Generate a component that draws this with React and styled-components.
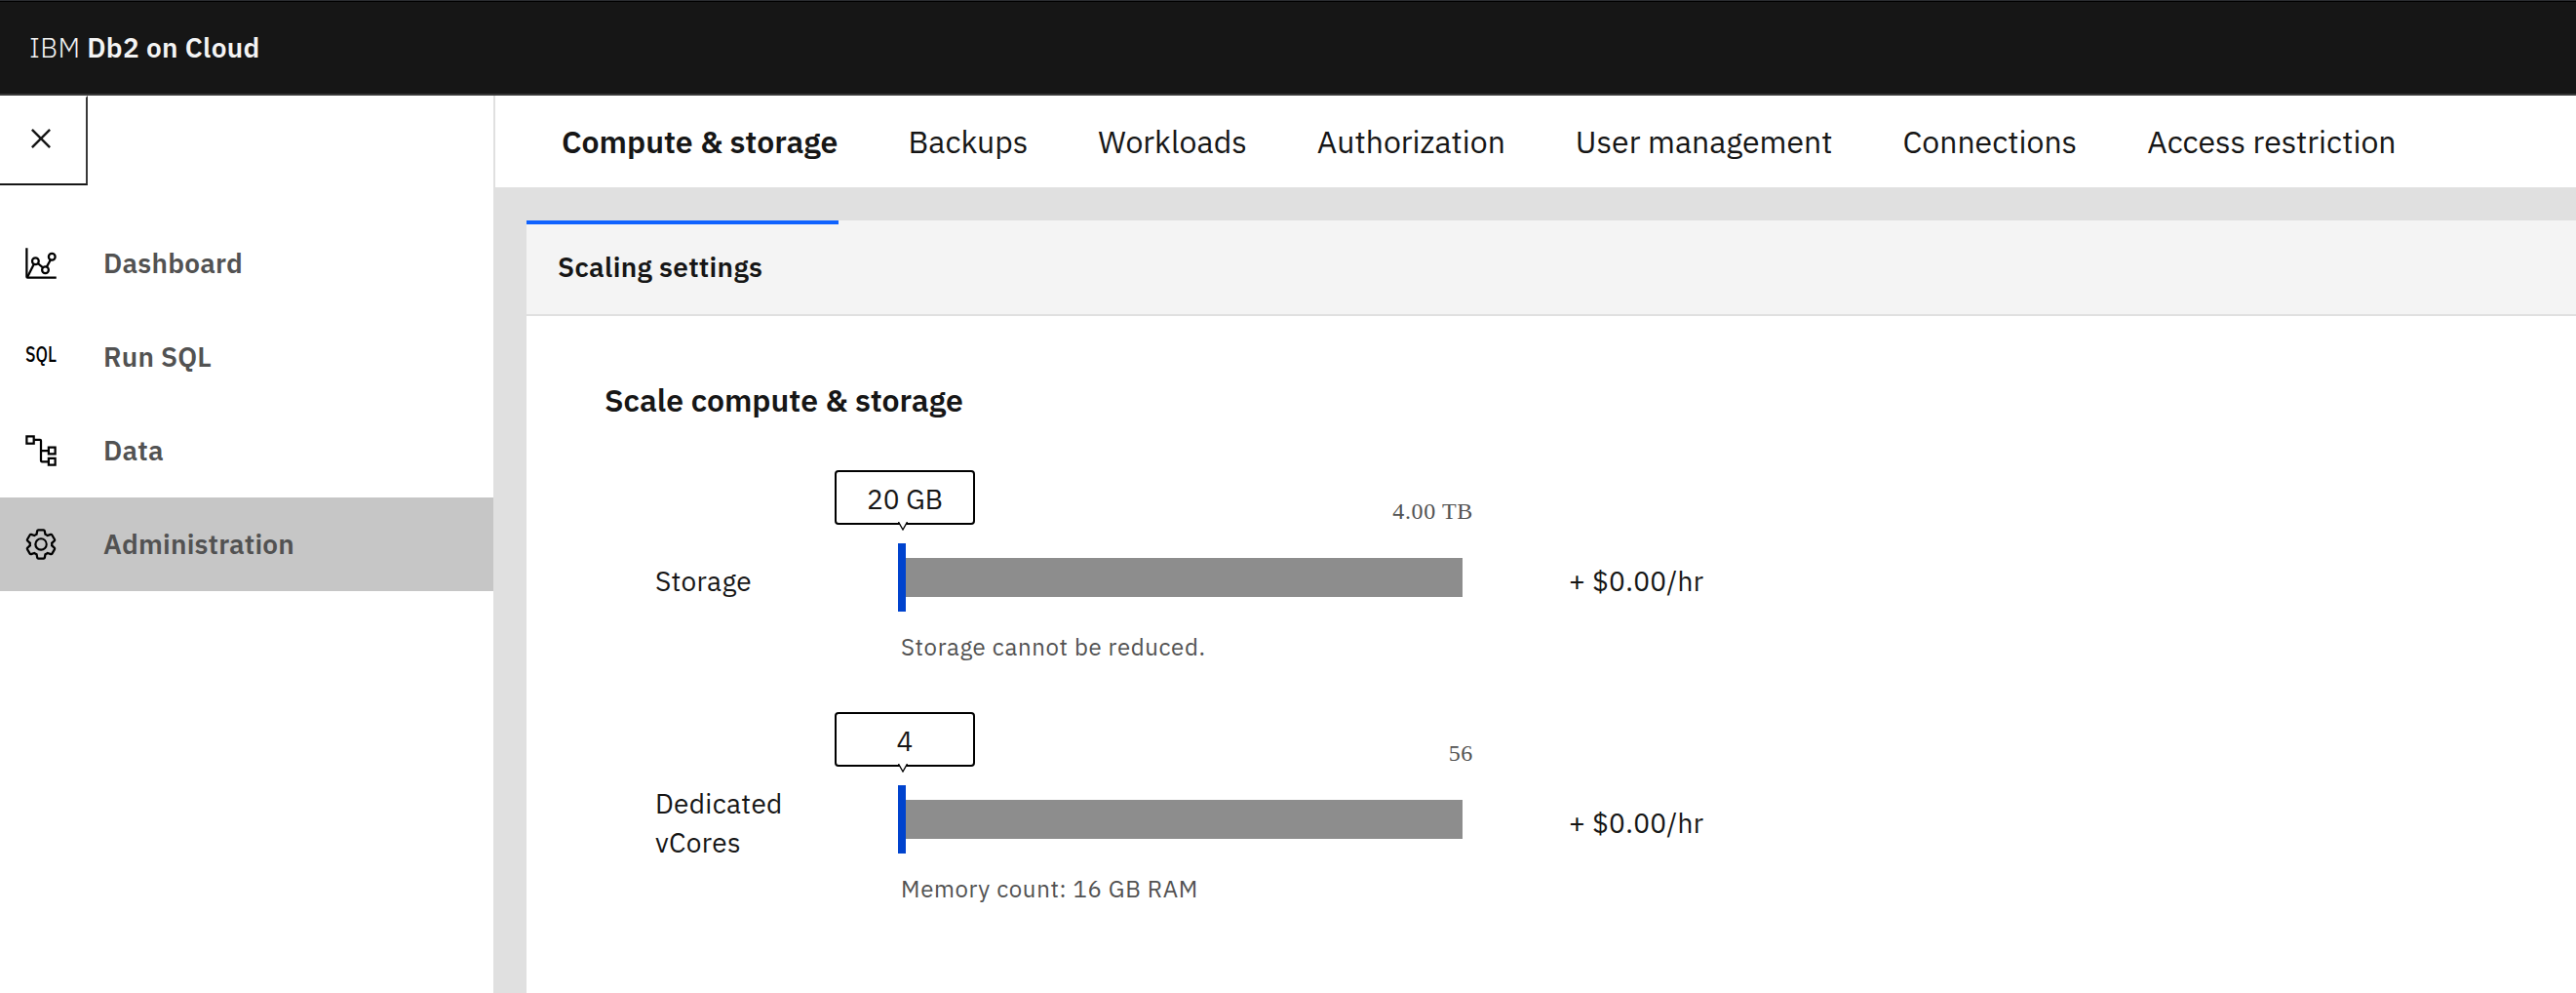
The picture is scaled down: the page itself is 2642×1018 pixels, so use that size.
import React from "react";
import styled, { createGlobalStyle } from "styled-components";

const GlobalStyle = createGlobalStyle`
  *, *::before, *::after { box-sizing: border-box; }
  body {
    margin: 0;
    background: #fff;
    color: #161616;
    font-family: "IBM Plex Sans", Roboto, "Liberation Sans", sans-serif;
    font-size: 28px;
    letter-spacing: 0.32px;
  }
`;

const Page = styled.div`
  display: flex;
  flex-direction: column;
  height: 1018px;
  overflow: hidden;
`;

const Header = styled.header`
  display: flex;
  align-items: center;
  flex: none;
  height: 98px;
  padding: 0 30px;
  background: #161616;
  border-top: 1px solid #2b2d31;
  border-bottom: 2px solid #393939;
  box-shadow: inset 0 1px 0 #000;
  color: #f4f4f4;
  white-space: pre;
`;

const Vendor = styled.span`
  font-weight: 300;
`;

const Product = styled.span`
  font-weight: 600;
`;

const Body = styled.div`
  display: flex;
  flex: 1;
  min-height: 0;
`;

const Sidebar = styled.aside`
  flex: none;
  width: 508px;
  border-right: 2px solid #e0e0e0;
  background: #fff;
`;

const CloseButton = styled.button`
  display: flex;
  align-items: center;
  width: 90px;
  height: 92px;
  padding: 0 0 4px 22px;
  border-style: solid;
  border-color: #fff #393939 #161616;
  border-width: 2px 2px 2px 0;
  background: #fff;
`;

const Nav = styled.nav`
  padding-top: 32px;
`;

const NavItem = styled.a`
  display: flex;
  align-items: center;
  gap: 46px;
  height: 96px;
  padding-left: 24px;
  background: ${(p) => (p.$active ? "#c6c6c6" : "transparent")};
  color: #525252;
  font-weight: 600;
  letter-spacing: 0.2px;
`;

const NavLabel = styled.span`
  padding-bottom: 1px;
`;

const Icon = styled.svg`
  flex: none;
  display: block;
  overflow: visible;
  width: ${(p) => p.$size}px;
  height: ${(p) => p.$size}px;
  fill: ${(p) => (p.$stroked ? "none" : p.$color || "#000")};
  stroke: ${(p) => (p.$stroked ? "#000" : "none")};
  stroke-width: 2;
`;

const SqlText = styled.text`
  fill: #000;
  stroke: none;
  font-family: "IBM Plex Sans", Roboto, sans-serif;
  font-size: 22.5px;
  font-weight: 500;
  letter-spacing: 0;
`;

const Main = styled.main`
  display: flex;
  flex-direction: column;
  flex: 1;
  min-width: 0;
  background: #e0e0e0;
`;

const Tabs = styled.div`
  display: flex;
  align-items: center;
  gap: 72px;
  flex: none;
  height: 94px;
  padding-left: 68px;
  background: #fff;
  font-size: 32px;
  letter-spacing: 0;
`;

const Tab = styled.span`
  font-weight: ${(p) => (p.$active ? 600 : 400)};
  white-space: nowrap;
`;

const Panel = styled.section`
  display: flex;
  flex-direction: column;
  flex: 1;
  margin: 34px 0 0 32px;
  background: #fff;
`;

const PanelBar = styled.div`
  flex: none;
  height: 98px;
  background: #f4f4f4;
  border-bottom: 2px solid #e0e0e0;
`;

const PanelTab = styled.div`
  display: flex;
  align-items: center;
  width: 320px;
  height: 96px;
  padding: 0 0 5px 32px;
  border-top: 4px solid #0f62fe;
  font-weight: 600;
`;

const PanelBody = styled.div`
  padding: 66px 0 0 80px;
`;

const Heading = styled.h2`
  margin: 0 0 52px;
  font-size: 32px;
  line-height: 40px;
  font-weight: 600;
  letter-spacing: 0;
`;

const ScaleRow = styled.div`
  display: grid;
  grid-template-columns: 249px 590px auto;
  height: 248px;
  padding-left: 52px;
`;

const RowLabel = styled.div`
  display: flex;
  align-items: center;
  width: 150px;
  height: 228px;
  line-height: 40px;
`;

const Price = styled(RowLabel)`
  width: auto;
  padding-left: 98px;
`;

const Slider = styled.div`
  display: flex;
  flex-direction: column;
`;

const SliderTop = styled.div`
  display: flex;
  justify-content: space-between;
  height: 75px;
  margin-left: -65px;
`;

const Bubble = styled.div`
  position: relative;
  display: flex;
  justify-content: center;
  width: 144px;
  height: 56px;
  padding-top: 8px;
  border: 2px solid #000;
  border-radius: 4px;
  background: #fff;
  line-height: 40px;
  letter-spacing: 0;
`;

const BubbleTail = styled.svg`
  position: absolute;
  left: 63px;
  top: 51px;
  width: 10px;
  height: 9px;
  fill: #fff;
  stroke: #000;
  stroke-width: 1.3;
`;

const MaxValue = styled.span`
  margin-top: 26px;
  font-family: "Liberation Serif", serif;
  font-size: 24px;
  line-height: 32px;
  letter-spacing: 0.64px;
  color: #525252;
`;

const Track = styled.div`
  display: flex;
  align-items: center;
  height: 70px;
`;

const Handle = styled.div`
  flex: none;
  width: 8px;
  height: 70px;
  background: #0043ce;
`;

const Rail = styled.div`
  width: 571px;
  height: 40px;
  background: #8d8d8d;
`;

const Hint = styled.div`
  padding: 20px 0 0 3px;
  font-size: 24px;
  line-height: 32px;
  letter-spacing: 0.64px;
  color: #525252;
`;

const CloseIcon = () => (
  <Icon $size={40} $color="#161616" viewBox="0 0 32 32">
    <path d="M24 9.4 22.6 8 16 14.6 9.4 8 8 9.4l6.6 6.6L8 22.6 9.4 24l6.6-6.6 6.6 6.6 1.4-1.4-6.6-6.6L24 9.4z" />
  </Icon>
);

const DashboardIcon = () => (
  <Icon $size={36} $stroked viewBox="0 0 32 32">
    <path d="M3 2v26.2a.8.8 0 0 0 .8.8H30" />
    <path d="M3.6 28.6 9.6 16.7M13.2 16l4.6 3.9M21.2 19.2l3.6-6.5" />
    <circle cx="11" cy="14" r="3" />
    <circle cx="20" cy="22" r="3" />
    <circle cx="26" cy="10" r="3" />
  </Icon>
);

const SqlIcon = () => (
  <Icon $size={36} viewBox="0 0 36 36">
    <SqlText x="2" y="23.3" textLength="32" lengthAdjust="spacingAndGlyphs">SQL</SqlText>
  </Icon>
);

const DataIcon = () => (
  <Icon $size={36} $stroked viewBox="0 0 32 32">
    <rect x="3" y="3" width="6.5" height="6.5" />
    <rect x="23" y="13" width="6" height="6" />
    <rect x="23" y="23" width="6" height="6" />
    <path d="M10 6h5.2a.8.8 0 0 1 .8.8v18.4a.8.8 0 0 0 .8.8H23M16 16h7" />
  </Icon>
);

const GearIcon = () => (
  <Icon $size={36} viewBox="0 0 32 32">
    <path d="M27 16.76c0-.25 0-.5 0-.76s0-.51 0-.77l1.92-1.68A2 2 0 0 0 29.3 11L26.94 7a2 2 0 0 0-1.73-1 2 2 0 0 0-.64.1l-2.43.82a11.35 11.35 0 0 0-1.31-.75l-.51-2.52a2 2 0 0 0-2-1.61h-4.68a2 2 0 0 0-2 1.61l-.51 2.52a11.48 11.48 0 0 0-1.32.75l-2.38-.86A2 2 0 0 0 6.79 6a2 2 0 0 0-1.73 1L2.7 11a2 2 0 0 0 .41 2.51L5 15.24c0 .25 0 .5 0 .76s0 .51 0 .77l-1.89 1.68A2 2 0 0 0 2.7 21l2.36 4a2 2 0 0 0 1.73 1 2 2 0 0 0 .64-.1l2.43-.82a11.35 11.35 0 0 0 1.31.75l.51 2.52a2 2 0 0 0 2 1.61h4.72a2 2 0 0 0 2-1.61l.51-2.52a11.48 11.48 0 0 0 1.32-.75l2.42.82a2 2 0 0 0 .64.1 2 2 0 0 0 1.73-1L29.3 21a2 2 0 0 0-.41-2.51ZM25.21 24l-3.43-1.16a8.86 8.86 0 0 1-2.71 1.57L18.36 28h-4.72l-.71-3.55a9.36 9.36 0 0 1-2.7-1.57L6.79 24l-2.36-4 2.72-2.4a8.9 8.9 0 0 1 0-3.13L4.43 12l2.36-4 3.43 1.16a8.86 8.86 0 0 1 2.71-1.57L13.64 4h4.72l.71 3.55a9.36 9.36 0 0 1 2.7 1.57L25.21 8l2.36 4-2.72 2.4a8.9 8.9 0 0 1 0 3.13L27.57 20Z" />
    <path d="M16 22a6 6 0 1 1 6-6 5.94 5.94 0 0 1-6 6Zm0-10.2a4.1 4.1 0 1 0 4.2 4.2A4.1 4.1 0 0 0 16 11.8Z" />
  </Icon>
);

const NAV = [
  { label: "Dashboard", Glyph: DashboardIcon },
  { label: "Run SQL", Glyph: SqlIcon },
  { label: "Data", Glyph: DataIcon },
  { label: "Administration", Glyph: GearIcon, active: true },
];

const TABS = [
  "Compute & storage",
  "Backups",
  "Workloads",
  "Authorization",
  "User management",
  "Connections",
  "Access restriction",
];

const ROWS = [
  { label: "Storage", value: "20 GB", max: "4.00 TB", hint: "Storage cannot be reduced.", price: "+ $0.00/hr" },
  { label: "Dedicated vCores", value: "4", max: "56", hint: "Memory count: 16 GB RAM", price: "+ $0.00/hr" },
];

export default function App() {
  return (
    <Page>
      <GlobalStyle />
      <Header>
        <Vendor>IBM </Vendor>
        <Product>Db2 on Cloud</Product>
      </Header>
      <Body>
        <Sidebar>
          <CloseButton aria-label="Close menu">
            <CloseIcon />
          </CloseButton>
          <Nav>
            {NAV.map(({ label, Glyph, active }) => (
              <NavItem key={label} $active={active}>
                <Glyph />
                <NavLabel>{label}</NavLabel>
              </NavItem>
            ))}
          </Nav>
        </Sidebar>
        <Main>
          <Tabs>
            {TABS.map((t, i) => (
              <Tab key={t} $active={i === 0}>{t}</Tab>
            ))}
          </Tabs>
          <Panel>
            <PanelBar>
              <PanelTab>Scaling settings</PanelTab>
            </PanelBar>
            <PanelBody>
              <Heading>Scale compute &amp; storage</Heading>
              {ROWS.map((r) => (
                <ScaleRow key={r.label}>
                  <RowLabel>{r.label}</RowLabel>
                  <Slider>
                    <SliderTop>
                      <Bubble>
                        {r.value}
                        <BubbleTail viewBox="0 0 10 9">
                          <path d="M0.5 0 5 8 9.5 0" />
                        </BubbleTail>
                      </Bubble>
                      <MaxValue>{r.max}</MaxValue>
                    </SliderTop>
                    <Track>
                      <Handle />
                      <Rail />
                    </Track>
                    <Hint>{r.hint}</Hint>
                  </Slider>
                  <Price>{r.price}</Price>
                </ScaleRow>
              ))}
            </PanelBody>
          </Panel>
        </Main>
      </Body>
    </Page>
  );
}
